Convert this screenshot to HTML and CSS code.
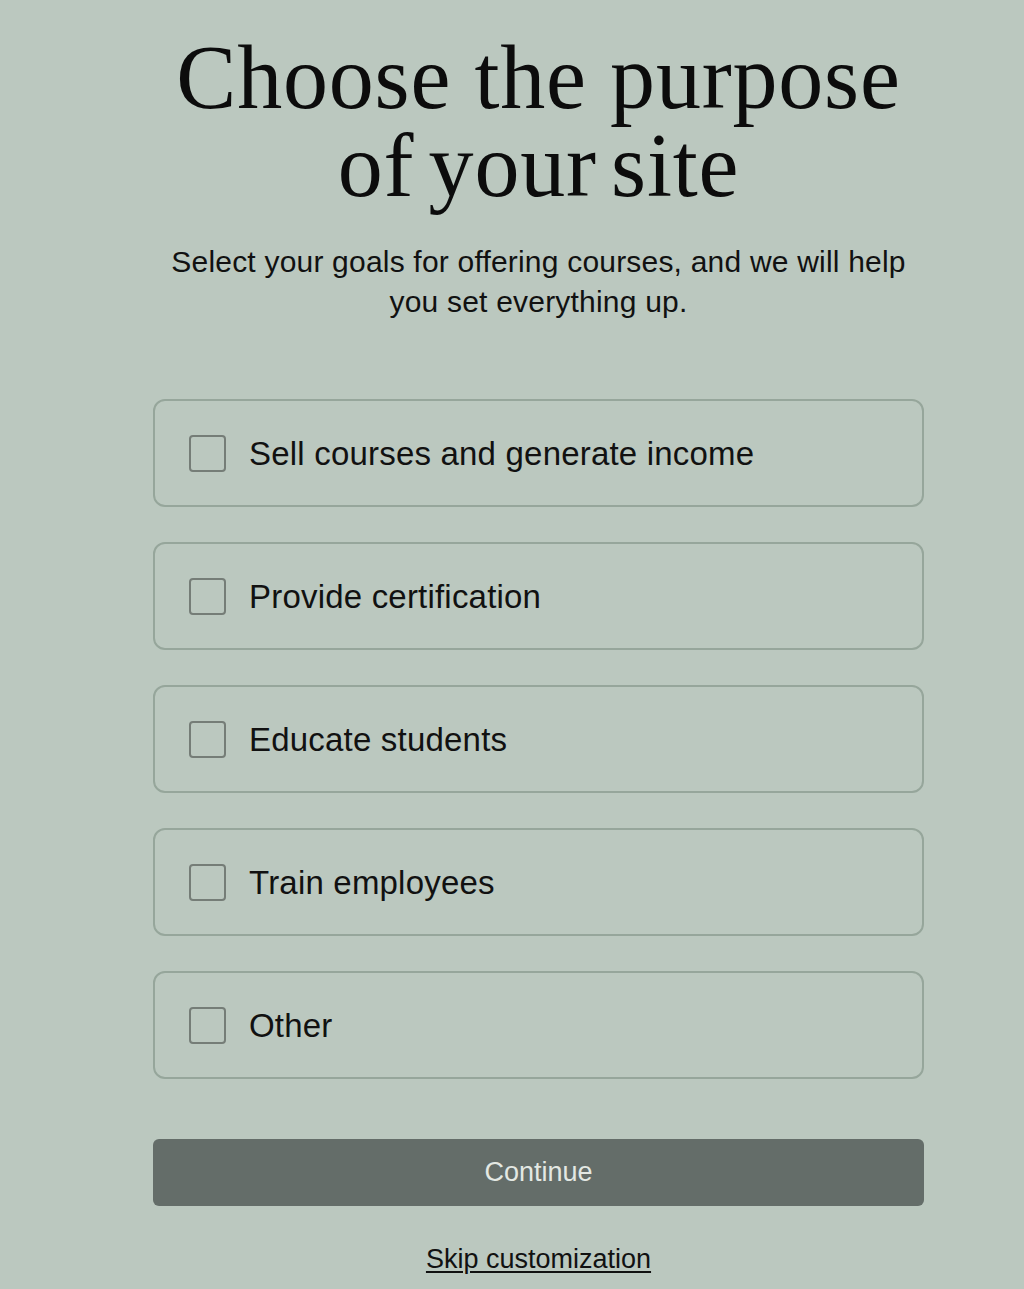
FILE: index.html
```html
<!DOCTYPE html>
<html lang="en">
<head>
<meta charset="utf-8">
<title>Choose the purpose of your site</title>
<link rel="stylesheet" href="styles.css">
</head>
<body>
<main class="page">
  <h1 class="title"><span class="title-line">Choose the purpose</span><span class="title-line tight">of your site</span></h1>
  <p class="subtitle">Select your goals for offering courses, and we will help you set everything up.</p>
  <div class="options">
    <label class="option"><span class="box"></span><span class="label">Sell courses and generate income</span></label>
    <label class="option"><span class="box"></span><span class="label">Provide certification</span></label>
    <label class="option"><span class="box"></span><span class="label">Educate students</span></label>
    <label class="option"><span class="box"></span><span class="label">Train employees</span></label>
    <label class="option"><span class="box"></span><span class="label">Other</span></label>
  </div>
  <button class="continue" type="button">Continue</button>
  <a class="skip" href="#">Skip customization</a>
</main>
</body>
</html>
```
FILE: styles.css
```css
html, body {
  margin: 0;
  padding: 0;
  background: #bbc8bf;
}
body {
  font-family: "Liberation Sans", Arial, sans-serif;
  color: #111;
}
.page {
  width: 771px;
  margin-left: 153px;
  display: flex;
  flex-direction: column;
  align-items: center;
}
.title {
  font-family: "Liberation Serif", "Times New Roman", serif;
  font-weight: normal;
  font-size: 90px;
  line-height: 88px;
  text-align: center;
  margin: 34px 0 0;
  color: #0c0c0c;
  letter-spacing: 0.8px;
  display: flex;
  flex-direction: column;
  align-items: center;
}
.title-line {
  display: block;
}
.tight {
  word-spacing: -9px;
}
.subtitle {
  width: 745px;
  font-size: 30px;
  line-height: 40px;
  letter-spacing: 0.2px;
  text-align: center;
  margin: 32px 0 0;
}
.options {
  width: 100%;
  display: flex;
  flex-direction: column;
  gap: 35px;
  margin-top: 77px;
}
.option {
  box-sizing: border-box;
  height: 108px;
  border: 2px solid #96a69b;
  border-radius: 12px;
  display: flex;
  align-items: center;
  padding-left: 34px;
  padding-top: 2px;
  gap: 23px;
}
.box {
  box-sizing: border-box;
  width: 37px;
  height: 37px;
  margin-top: -2px;
  border: 2px solid #757d77;
  border-radius: 4px;
}
.label {
  font-size: 33px;
  letter-spacing: 0.2px;
  color: #111;
}
.continue {
  width: 100%;
  height: 67px;
  margin-top: 60px;
  border: none;
  border-radius: 6px;
  background: #646d69;
  color: #e3e8e3;
  font-family: "Liberation Sans", Arial, sans-serif;
  font-size: 27px;
}
.skip {
  margin-top: 38px;
  font-size: 27px;
  color: #111;
  text-decoration: underline;
  text-underline-offset: 3px;
}
```
